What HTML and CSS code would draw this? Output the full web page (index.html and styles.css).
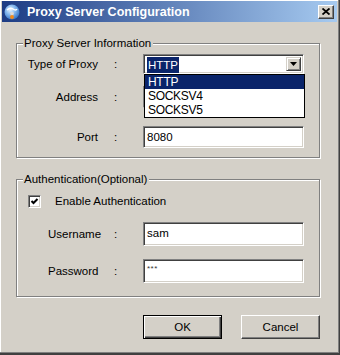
FILE: index.html
```html
<!DOCTYPE html>
<html lang="en">
<head>
    <meta charset="UTF-8">
    <title>Proxy Server Configuration</title>
    <link rel="stylesheet" href="styles.css">
</head>
<body>
    <div class="window">
        <div class="titlebar">
            <svg class="app-icon" width="16" height="16" viewBox="0 0 16 16">
                <defs>
                    <radialGradient id="globe" cx="0.4" cy="0.35" r="0.7">
                        <stop offset="0" stop-color="#e6f3ff"/>
                        <stop offset="0.5" stop-color="#7fb4ec"/>
                        <stop offset="1" stop-color="#2f6fc4"/>
                    </radialGradient>
                </defs>
                <circle cx="8" cy="8" r="7.5" fill="url(#globe)"/>
                <path d="M3 6 Q6 3 9 5 Q12 7 13 5" stroke="#fff" stroke-width="1.4" fill="none"/>
                <path d="M6 9 Q8 7 10 9 L9 12 L7 12 Z" fill="#d9d9d9"/>
                <circle cx="8" cy="13" r="2" fill="#f08a1c"/>
            </svg>
            <span class="title">Proxy Server Configuration</span>
            <span class="close-btn">
                <svg width="8" height="7" viewBox="0 0 8 7">
                    <path d="M0.5 0.5 L7.5 6.5 M7.5 0.5 L0.5 6.5" stroke="#000" stroke-width="1.8"/>
                </svg>
            </span>
        </div>

        <div class="body">
            <fieldset class="group group-proxy">
                <legend>Proxy Server Information</legend>
                <div class="row">
                    <span class="label">Type of Proxy</span>
                    <span class="colon">:</span>
                    <div class="combo">
                        <span class="combo-value"><span class="highlight">HTTP</span></span>
                        <span class="combo-arrow">
                            <svg width="7" height="4" viewBox="0 0 7 4"><path d="M0 0 H7 L3.5 4 Z" fill="#000"/></svg>
                        </span>
                        <ul class="combo-list">
                            <li class="selected">HTTP</li>
                            <li>SOCKSV4</li>
                            <li>SOCKSV5</li>
                        </ul>
                    </div>
                </div>
                <div class="row row-address">
                    <span class="label">Address</span>
                    <span class="colon">:</span>
                    <div class="textbox"></div>
                </div>
                <div class="row row-port">
                    <span class="label">Port</span>
                    <span class="colon">:</span>
                    <div class="textbox">8080</div>
                </div>
            </fieldset>

            <fieldset class="group group-auth">
                <legend>Authentication(Optional)</legend>
                <div class="check-row">
                    <span class="checkbox">
                        <svg width="9" height="9" viewBox="0 0 9 9"><path d="M1.5 4 L3.5 6 L7.5 2" stroke="#000" stroke-width="2" fill="none"/></svg>
                    </span>
                    <span>Enable Authentication</span>
                </div>
                <div class="row auth-row">
                    <span class="label">Username</span>
                    <span class="colon">:</span>
                    <div class="textbox tall">sam</div>
                </div>
                <div class="row auth-row row-password">
                    <span class="label">Password</span>
                    <span class="colon">:</span>
                    <div class="textbox tall secret">***</div>
                </div>
            </fieldset>

            <div class="buttons">
                <span class="btn default">OK</span>
                <span class="btn">Cancel</span>
            </div>
        </div>
    </div>
</body>
</html>
```

FILE: styles.css
```css
*{
    margin: 0;
    padding: 0;
    box-sizing: border-box;
}
ul{
    list-style: none;
}
body{
    font-family: "Liberation Sans", Arial, sans-serif;
    font-size: 11.5px;
    color: #000;
    background: #d4d0c8;
}
.window{
    width: 340px;
    height: 355px;
    padding: 1px 2px;
    background: #d4d0c8;
    border-right: 1px solid #404040;
    border-bottom: 2px solid #404040;
    box-shadow: inset -1px -1px #808080, inset 1px 1px #fff;
}

/* title bar */
.titlebar{
    height: 21px;
    display: flex;
    align-items: center;
    padding: 0 3px 0 2px;
    background: linear-gradient(90deg, #1d3c84, #a6caf0);
}
.app-icon{
    flex: none;
}
.title{
    flex: 1;
    margin-left: 7px;
    color: #fff;
    font-weight: bold;
    font-size: 12.5px;
}
.close-btn{
    width: 16px;
    height: 14px;
    display: flex;
    align-items: center;
    justify-content: center;
    background: #d4d0c8;
    border: 1px solid;
    border-color: #fff #404040 #404040 #fff;
    box-shadow: inset -1px -1px #808080;
}

.body{
    padding: 0 17px 0 14px;
}

/* group boxes */
.group{
    border: 1px solid #808080;
    box-shadow: inset 1px 1px #fff, 1px 1px #fff;
    margin-top: 14px;
}
.group legend{
    margin-left: 6px;
    padding: 0 2px 0 1px;
    line-height: 14px;
    background: #d4d0c8;
}
.group-proxy{
    padding: 4px 0 9px;
}
.group-auth{
    padding: 7px 0 13px;
}
.row{
    display: grid;
    grid-template-columns: 83px 43px 161px;
    align-items: center;
}
.row .label{
    text-align: right;
    padding-right: 2px;
}
.row .colon{
    padding-left: 14px;
}
.row-address{
    margin-top: 12px;
}
.row-port{
    margin-top: 18px;
}
.auth-row{
    margin-top: 13px;
}
.auth-row .label{
    text-align: left;
    padding-left: 31px;
}

/* edit boxes */
.textbox, .combo{
    height: 22px;
    background: #fff;
    border: 1px solid;
    border-color: #808080 #fff #fff #808080;
    box-shadow: inset 1px 1px #404040, inset -1px -1px #d4d0c8;
    padding: 3px 0 0 3px;
    line-height: 15px;
}
.textbox.tall{
    height: 24px;
    padding-top: 3px;
}
.textbox.secret{
    font-size: 8px;
    letter-spacing: 0.5px;
    padding-top: 1px;
    color: #333;
}

/* drop-down */
.combo{
    position: relative;
    height: 20px;
    display: flex;
    padding: 2px;
}
.combo-value{
    flex: 1;
    padding-left: 1px;
}
.highlight{
    display: inline-block;
    background: #0a246a;
    color: #fff;
    padding: 0 1px;
    line-height: 16px;
}
.combo-arrow{
    width: 15px;
    display: flex;
    align-items: center;
    justify-content: center;
    background: #d4d0c8;
    border: 1px solid;
    border-color: #d4d0c8 #404040 #404040 #d4d0c8;
    box-shadow: inset 1px 1px #fff, inset -1px -1px #808080;
}
.combo-list{
    position: absolute;
    left: 0;
    top: 19px;
    width: 161px;
    background: #fff;
    border: 1px solid #000;
    z-index: 2;
    letter-spacing: -0.3px;
    font-size: 12px;
}
.combo-list li{
    height: 14px;
    line-height: 14px;
    padding-left: 3px;
}
.combo-list li.selected{
    background: #0a246a;
    color: #fff;
}

/* checkbox */
.check-row{
    height: 16px;
    display: flex;
    align-items: center;
    padding-left: 11px;
}
.checkbox{
    width: 13px;
    height: 13px;
    margin-right: 14px;
    display: flex;
    align-items: center;
    justify-content: center;
    background: #fff;
    border: 1px solid;
    border-color: #808080 #fff #fff #808080;
    box-shadow: inset 1px 1px #404040, inset -1px -1px #d4d0c8;
}

/* buttons */
.buttons{
    display: flex;
    justify-content: flex-end;
    gap: 19px;
    margin-top: 18px;
}
.btn{
    width: 79px;
    height: 24px;
    line-height: 22px;
    text-align: center;
    background: #d4d0c8;
    border: 1px solid;
    border-color: #fff #404040 #404040 #fff;
    box-shadow: inset -1px -1px #808080;
    cursor: pointer;
}
.btn.default{
    border-color: #000;
    box-shadow: inset 1px 1px #fff, inset -1px -1px #404040, inset -2px -2px #808080;
}
```
